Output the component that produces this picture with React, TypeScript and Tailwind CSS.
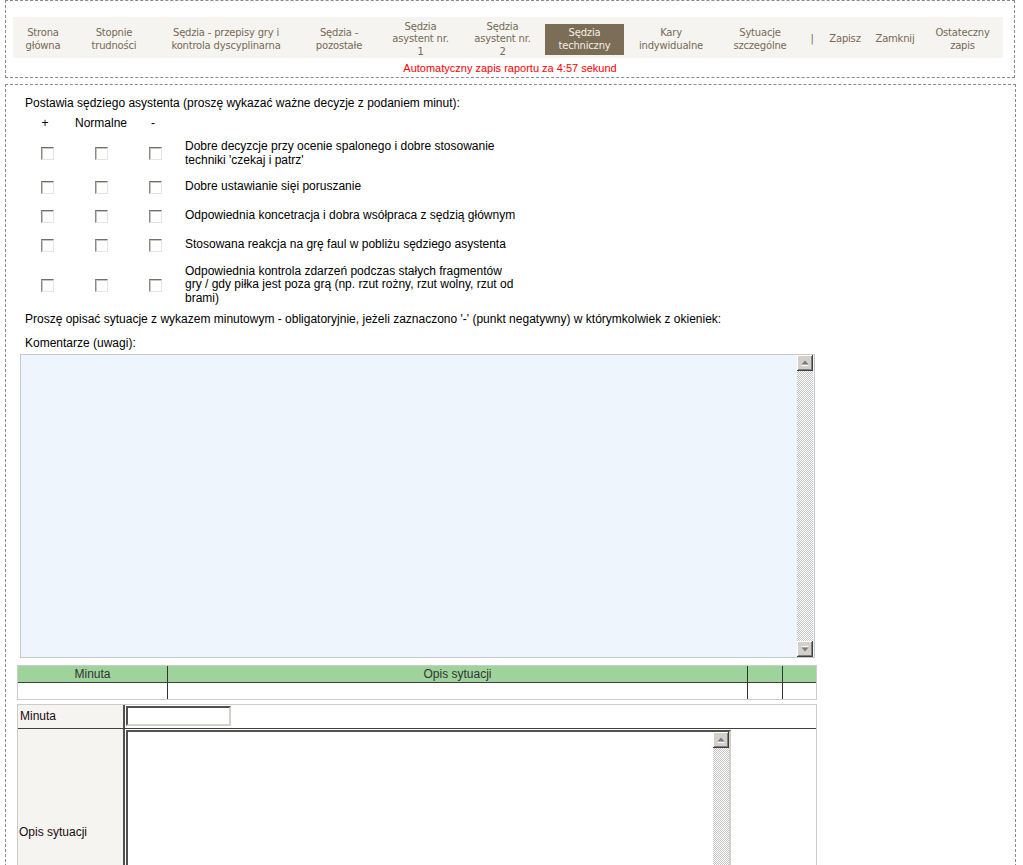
import { useState } from "react";

const navItems = [
  { lines: ["Strona", "główna"], w: "w-[60px]" },
  { lines: ["Stopnie", "trudności"], w: "w-[82px]" },
  { lines: ["Sędzia - przepisy gry i", "kontrola dyscyplinarna"], w: "w-[142px]" },
  { lines: ["Sędzia -", "pozostałe"], w: "w-[84px]" },
  { lines: ["Sędzia", "asystent nr.", "1"], w: "w-[79px]" },
  { lines: ["Sędzia", "asystent nr.", "2"], w: "w-[85px]" },
  { lines: ["Sędzia", "techniczny"], w: "w-[79px]", active: true },
  { lines: ["Kary", "indywidualne"], w: "w-[94px]" },
  { lines: ["Sytuacje", "szczególne"], w: "w-[84px]" },
  { lines: ["|"], w: "w-[20px]" },
  { lines: ["Zapisz"], w: "w-[46px]" },
  { lines: ["Zamknij"], w: "w-[54px]" },
  { lines: ["Ostateczny", "zapis"], w: "w-[81px]" },
];

const criteria = [
  ["Dobre decyzcje przy ocenie spalonego i dobre stosowanie", "techniki 'czekaj i patrz'"],
  ["Dobre ustawianie sięi poruszanie"],
  ["Odpowiednia koncetracja i dobra wsółpraca z sędzią głównym"],
  ["Stosowana reakcja na grę faul w pobliżu sędziego asystenta"],
  [
    "Odpowiednia kontrola zdarzeń podczas stałych fragmentów",
    "gry / gdy piłka jest poza grą (np. rzut rożny, rzut wolny, rzut od",
    "brami)",
  ],
];

function Checkbox() {
  const [checked, setChecked] = useState(false);
  return (
    <input
      type="checkbox"
      checked={checked}
      onChange={() => setChecked(!checked)}
      className="m-0 block h-[13px] w-[13px] appearance-none border border-t-[#6f6f6f] border-l-[#8a8a8a] border-r-[#e4e4e4] border-b-[#e4e4e4] bg-white shadow-[inset_1px_1px_0_#c9c6bf]"
    />
  );
}

function ScrollButton({ up }: { up?: boolean }) {
  return (
    <div className="flex h-[16px] w-[16px] shrink-0 items-center justify-center bg-[#d4d0c8] shadow-[inset_-1px_-1px_0_#404040,inset_1px_1px_0_#ffffff,inset_-2px_-2px_0_#808080]">
      <svg width="8" height="6" viewBox="0 0 8 6">
        {up ? (
          <>
            <path d="M4 0.5L7.5 4.5H0.5Z" fill="#7a7a8a" />
            <path d="M0.5 5.5H7.5" stroke="#ffffff" />
          </>
        ) : (
          <>
            <path d="M0.5 1.5H7.5L4 5.5Z" fill="#7a7a8a" />
            <path d="M0.5 0.5H7.5" stroke="#ffffff" />
          </>
        )}
      </svg>
    </div>
  );
}

function Scrollbar() {
  return (
    <div className="flex w-[16px] shrink-0 flex-col justify-between bg-[image:repeating-conic-gradient(#c6c6c6_0_25%,#ffffff_0_50%)] bg-[length:2px_2px]">
      <ScrollButton up />
      <ScrollButton />
    </div>
  );
}

export default function App() {
  return (
    <div className="min-h-screen bg-white pl-[5px] font-['Liberation_Sans',Arial,sans-serif] text-[12px] text-black">
      {/* top navigation */}
      <div className="w-[1010px] border border-dashed border-[#8a8a8a] pt-[16px] pb-[2px]">
        <nav className="ml-[7px] flex h-[41px] w-[990px] items-center bg-[#f5f4f0] pt-[4px] font-['DejaVu_Sans',Verdana,sans-serif] text-[10px] leading-[12.5px] tracking-[-0.2px] text-[#766a55]">
          {navItems.map((item, i) => (
            <div key={i} className={`${item.w} flex shrink-0 justify-center`}>
              <a
                href="#"
                className={
                  item.active
                    ? "block w-full bg-[#7b6d56] py-[3px] text-center text-[#f3efe6]"
                    : "block text-center"
                }
              >
                {item.lines.map((l, j) => (
                  <span key={j} className="block whitespace-nowrap">
                    {l}
                  </span>
                ))}
              </a>
            </div>
          ))}
        </nav>
        <p className="mt-[4px] text-center text-[11px] leading-[13px] text-[#ff0000]">
          Automatyczny zapis raportu za 4:57 sekund
        </p>
      </div>

      {/* form */}
      <div className="mt-[6px] w-[1011px] border border-dashed border-[#8a8a8a] pt-[11px] pb-[20px] pl-[11px]">
        <p className="ml-[8px] leading-[14px]">
          Postawia sędziego asystenta (proszę wykazać ważne decyzje z podaniem minut):
        </p>

        <div className="ml-[3px] mt-[3px]">
          <div className="flex h-[20px] items-center">
            <span className="w-[50px] text-center">+</span>
            <span className="w-[62px] text-center">Normalne</span>
            <span className="w-[42px] text-center">-</span>
          </div>
          <div className="pt-[2px]">
            {criteria.map((lines, i) => (
              <div key={i} className="flex items-center py-[5px]">
                {[0, 1, 2].map((c) => (
                  <div key={c} className="flex h-[19px] w-[54px] items-center justify-center">
                    <Checkbox />
                  </div>
                ))}
                <div className="w-[340px] pl-[3px] leading-[13.8px]">
                  {lines.map((l, j) => (
                    <span key={j} className="block whitespace-nowrap">
                      {l}
                    </span>
                  ))}
                </div>
              </div>
            ))}
          </div>
        </div>

        <p className="ml-[8px] mt-[1px] leading-[14px]">
          Proszę opisać sytuacje z wykazem minutowym - obligatoryjnie, jeżeli zaznaczono '-' (punkt negatywny) w którymkolwiek z okieniek:
        </p>
        <p className="ml-[8px] mt-[10px] leading-[14px]">Komentarze (uwagi):</p>

        <div className="ml-[3px] mt-[4px] flex h-[304px] w-[795px] border border-[#c8c8c8] bg-[#eef5fd]">
          <textarea className="flex-1 resize-none bg-transparent p-[2px] outline-none" />
          <Scrollbar />
          <div className="w-[1px]" />
        </div>

        {/* situations list */}
        <div className="mt-[7px] w-[800px] border border-[#cccccc] leading-[16px] text-[#333333]">
          <div className="flex h-[17px] border-b border-[#404040] bg-[#9ed39c]">
            <div className="w-[150px] border-r border-[#333333] text-center">Minuta</div>
            <div className="w-[580px] border-r border-[#333333] text-center">Opis sytuacji</div>
            <div className="w-[35px] border-r border-[#333333]" />
            <div className="flex-1" />
          </div>
          <div className="flex h-[16px] bg-white">
            <div className="w-[150px] border-r border-[#333333]" />
            <div className="w-[580px] border-r border-[#333333]" />
            <div className="w-[35px] border-r border-[#333333]" />
            <div className="flex-1" />
          </div>
        </div>

        {/* new situation form */}
        <div className="mt-[4px] w-[800px] border border-[#cccccc] text-[#1a0a10]">
          <div className="flex h-[24px] border-b border-[#404040]">
            <div className="flex w-[107px] items-center border-r-2 border-r-[#505050] bg-[#f5f4f0] pl-[2px]">
              Minuta
            </div>
            <div className="flex items-center pl-[1px]">
              <input
                type="text"
                className="h-[20px] w-[105px] border-2 border-t-[#505050] border-l-[#505050] border-r-[#d4d0c8] border-b-[#d4d0c8] bg-white px-[2px] outline-none"
              />
            </div>
          </div>
          <div className="flex h-[206px]">
            <div className="flex w-[107px] items-center border-r-2 border-r-[#505050] bg-[#f5f4f0] pl-[1px]">
              Opis sytuacji
            </div>
            <div className="pl-[1px] pt-[1px]">
              <div className="flex h-[202px] w-[605px] border-2 border-t-[#505050] border-l-[#505050] border-r-[#d4d0c8] border-b-[#d4d0c8] bg-white">
                <textarea className="flex-1 resize-none bg-transparent p-[2px] outline-none" />
                <Scrollbar />
              </div>
            </div>
          </div>
        </div>
      </div>
    </div>
  );
}
